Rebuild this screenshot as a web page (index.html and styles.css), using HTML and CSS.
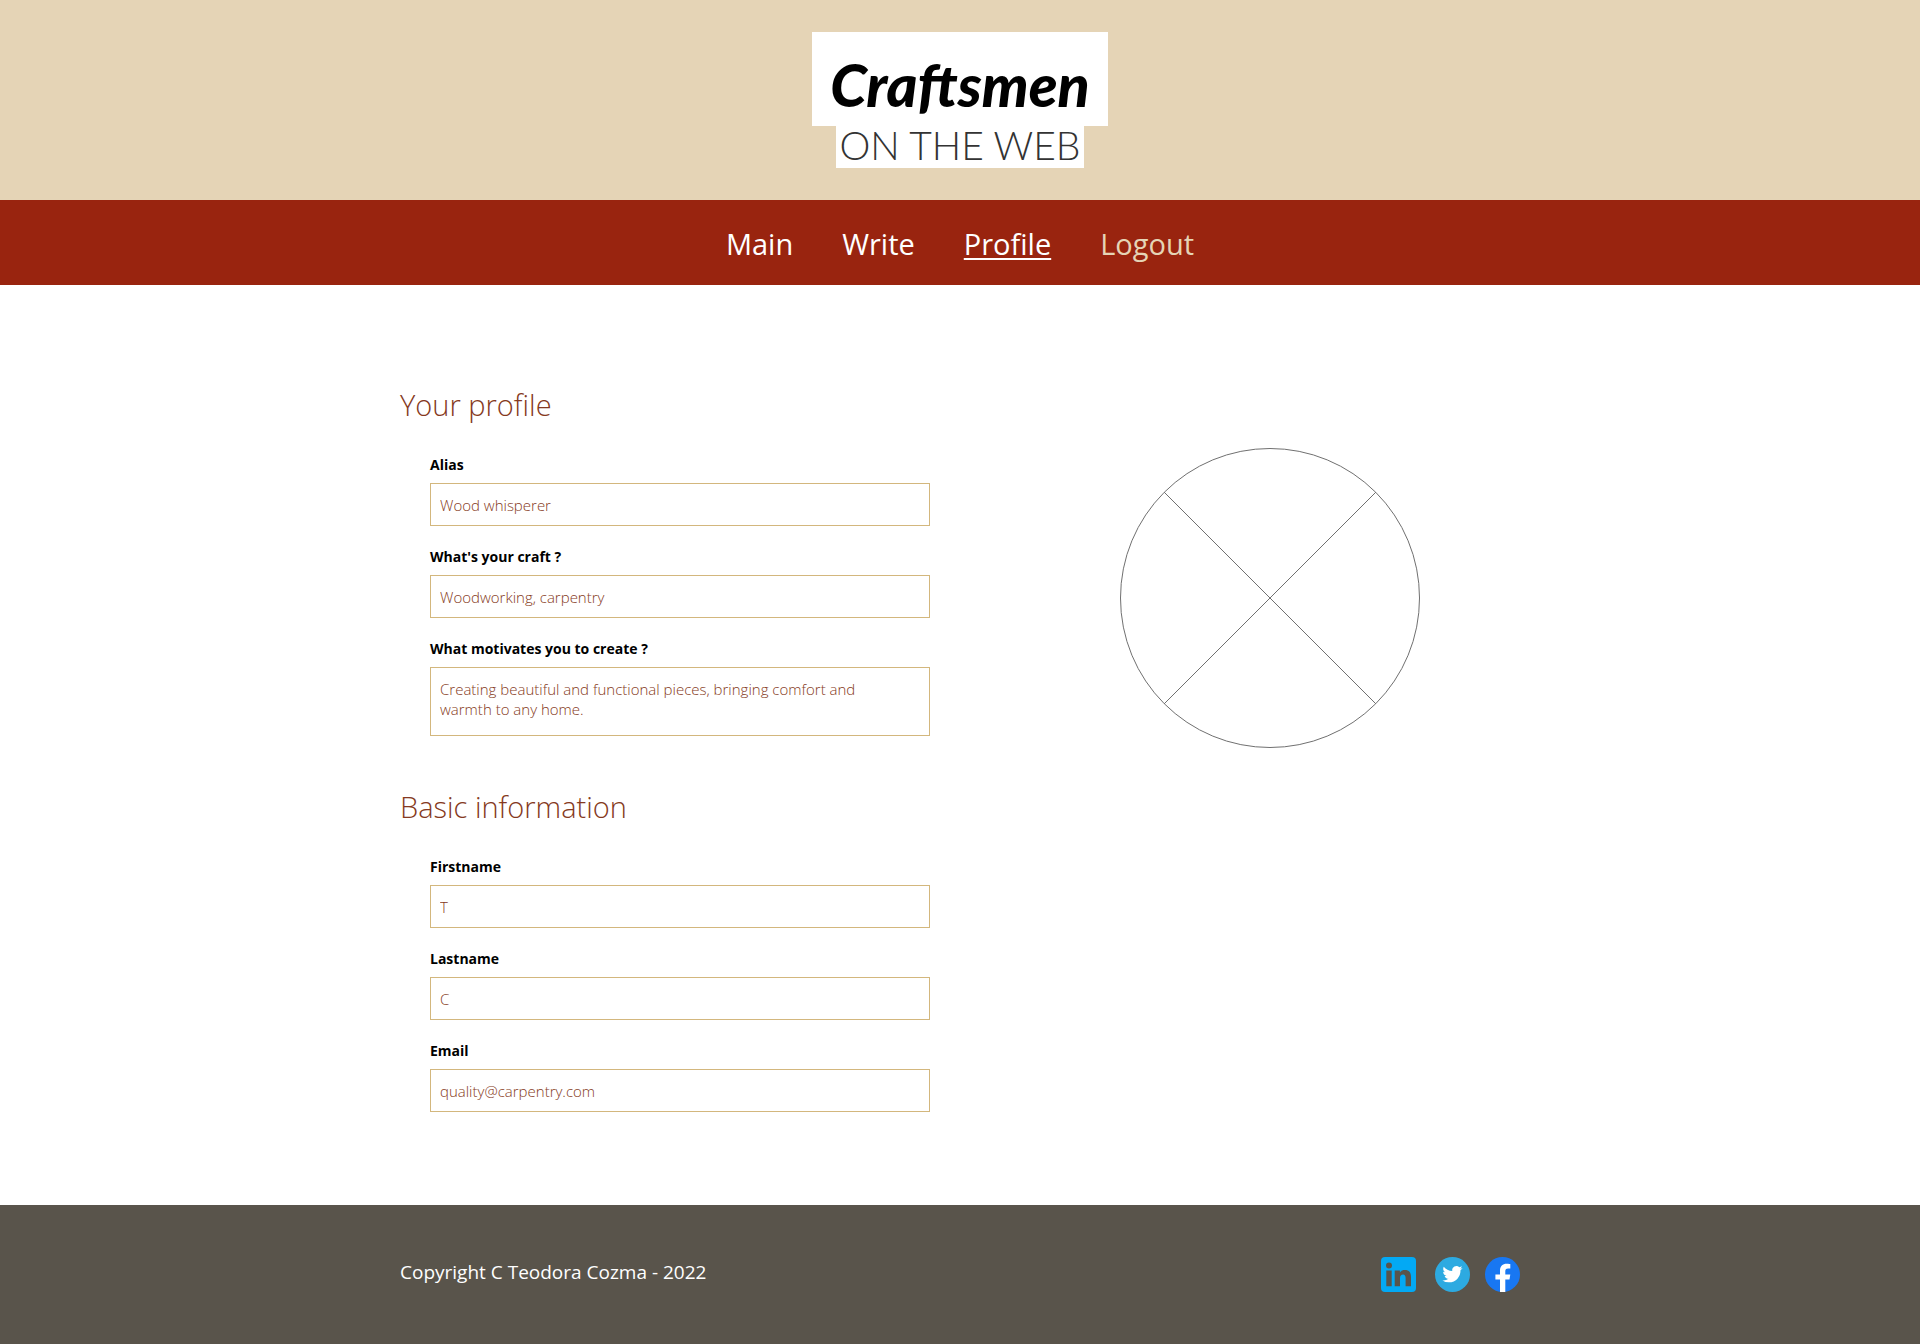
FILE: index.html
```html
<!DOCTYPE html>
<html lang="en">
<head>
<meta charset="utf-8">
<meta name="viewport" content="width=device-width, initial-scale=1">
<title>Craftsmen on the web - Profile</title>
<link rel="stylesheet" href="styles.css">
</head>
<body>
<header class="banner">
  <div class="logo">
    <span class="logo-name">Craftsmen</span>
    <span class="logo-tagline">ON THE WEB</span>
  </div>
</header>
<nav class="menu">
  <a class="menu-link" href="#main">Main</a>
  <a class="menu-link" href="#write">Write</a>
  <a class="menu-link menu-link-current" href="#profile">Profile</a>
  <a class="menu-link menu-link-logout" href="#logout">Logout</a>
</nav>
<main class="page">
  <form class="forms">
    <section class="group">
      <h2 class="group-title">Your profile</h2>
      <div class="fields">
        <div class="field">
          <label class="label" for="alias">Alias</label>
          <input class="control" id="alias" type="text" value="Wood whisperer">
        </div>
        <div class="field">
          <label class="label" for="craft">What's your craft ?</label>
          <input class="control" id="craft" type="text" value="Woodworking, carpentry">
        </div>
        <div class="field">
          <label class="label" for="motivation">What motivates you to create ?</label>
          <textarea class="control control-area" id="motivation" rows="2">Creating beautiful and functional pieces, bringing comfort and warmth to any home.</textarea>
        </div>
      </div>
    </section>
    <section class="group">
      <h2 class="group-title">Basic information</h2>
      <div class="fields">
        <div class="field">
          <label class="label" for="firstname">Firstname</label>
          <input class="control" id="firstname" type="text" value="T">
        </div>
        <div class="field">
          <label class="label" for="lastname">Lastname</label>
          <input class="control" id="lastname" type="text" value="C">
        </div>
        <div class="field">
          <label class="label" for="email">Email</label>
          <input class="control" id="email" type="email" value="quality@carpentry.com">
        </div>
      </div>
    </section>
  </form>
  <svg class="avatar" viewBox="0 0 300 300" role="img" aria-label="Profile picture">
    <circle cx="150" cy="150" r="149.5"/>
    <path d="M44 44 256 256M256 44 44 256"/>
  </svg>
</main>
<footer class="footer">
  <div class="footer-inner">
    <p class="copyright">Copyright C Teodora Cozma - 2022</p>
    <div class="social">
      <a class="social-link social-link-first" href="#linkedin" aria-label="LinkedIn">
        <svg class="social-icon" viewBox="0 0 35 35">
          <rect width="35" height="35" rx="4" fill="#03a9f4"/>
          <g fill="#59544b"><circle cx="8" cy="8.500" r="3"/><path d="M5.300 13.500h5.400v15.700H5.300zM13.700 13.500h5.200v2.100c.9-1.600 2.700-2.500 4.900-2.500 4.300 0 6.200 2.600 6.200 7v9.100h-5.400v-8.200c0-2.300-.8-3.500-2.600-3.500-2 0-3 1.400-3 3.600v8.100h-5.300z"/></g>
        </svg>
      </a>
      <a class="social-link" href="#twitter" aria-label="Twitter">
        <svg class="social-icon" viewBox="0 0 35 35">
          <circle cx="17.500" cy="17.500" r="17.500" fill="#2daae1"/>
          <path transform="translate(7.400 7.100) scale(.84)" fill="#fff" d="M23.953 4.570a10 10 0 0 1-2.825.775 4.958 4.958 0 0 0 2.163-2.723c-.951.555-2.005.959-3.127 1.184a4.920 4.920 0 0 0-8.384 4.482C7.690 8.095 4.067 6.130 1.640 3.162a4.822 4.822 0 0 0-.666 2.475c0 1.710.870 3.213 2.188 4.096a4.904 4.904 0 0 1-2.228-.616v.060a4.923 4.923 0 0 0 3.946 4.827 4.996 4.996 0 0 1-2.212.085 4.936 4.936 0 0 0 4.604 3.417 9.867 9.867 0 0 1-6.102 2.105c-.390 0-.779-.023-1.170-.067a13.995 13.995 0 0 0 7.557 2.209c9.053 0 13.998-7.496 13.998-13.985 0-.210 0-.420-.015-.630A9.935 9.935 0 0 0 24 4.590z"/>
        </svg>
      </a>
      <a class="social-link" href="#facebook" aria-label="Facebook">
        <svg class="social-icon" viewBox="0 0 35 35">
          <circle cx="17.500" cy="17.500" r="17.500" fill="#1877f2"/>
          <path fill="#fff" d="M15 35V22.600h-4.600v-5H15v-3.900C15 9.200 17.700 6.800 21.700 6.800c2 0 3.600.3 3.600.3v4.400h-2.200c-2.200 0-2.800 1.300-2.800 2.700v3.400h5l-.8 5h-4.200V35z"/>
        </svg>
      </a>
    </div>
  </div>
</footer>
</body>
</html>
```
FILE: styles.css
```css
* {
  box-sizing: border-box;
}

body {
  margin: 0;
  background: #fff;
  color: #000;
  font-family: "Open Sans", "Noto Sans", sans-serif;
}

.banner {
  display: flex;
  justify-content: center;
  padding: 32px 24px;
  background: #e5d4b6;
}

.logo {
  display: flex;
  flex-direction: column;
  align-items: center;
  color: #000;
  white-space: nowrap;
}

.logo-name {
  padding: 12px 18px 0;
  background: #fff;
  font-family: "Lato", sans-serif;
  font-size: 59px;
  font-style: italic;
  font-weight: 900;
  line-height: 82px;
}

.logo-tagline {
  padding: 0 3px 4px;
  background: #fff;
  color: #333;
  font-family: "Lato", sans-serif;
  font-size: 39px;
  font-weight: 300;
  line-height: 38px;
}

.menu {
  display: flex;
  flex-wrap: wrap;
  justify-content: center;
  gap: 0 49px;
  padding: 24px 24px 21px;
  background: #99240f;
}

.menu-link {
  color: #fff;
  font-size: 29px;
  line-height: 40px;
  text-decoration: none;
}

.menu-link-current {
  text-decoration: underline;
  text-decoration-thickness: 2px;
  text-underline-offset: 3px;
}

.menu-link-logout {
  color: #e5d4b6;
}

.page {
  display: flex;
  flex-wrap: wrap;
  align-items: flex-start;
  gap: 62px 190px;
  max-width: 1168px;
  margin: 0 auto;
  padding: 101px 24px 93px;
}

.forms {
  display: flex;
  flex-direction: column;
  flex: 0 1 530px;
  gap: 52px;
}

.group {
  display: flex;
  flex-direction: column;
  gap: 31px;
}

.group-title {
  margin: 0;
  color: #853921;
  font-size: 29px;
  font-weight: 300;
  line-height: 38px;
}

.fields {
  display: flex;
  flex-direction: column;
  gap: 21px;
  padding-left: 30px;
}

.field {
  display: flex;
  flex-direction: column;
  gap: 8px;
}

.label {
  font-size: 14px;
  font-weight: 700;
  line-height: 20px;
}

.control {
  display: block;
  width: 100%;
  margin: 0;
  padding: 11px 9px 10px;
  border: 1px solid #d3b77d;
  border-radius: 0;
  background: #fff;
  color: #853921;
  font-family: inherit;
  font-size: 15px;
  font-weight: 300;
  line-height: 20px;
}

.control-area {
  padding: 11px 60px 16px 9px;
  overflow: hidden;
  resize: none;
}

.avatar {
  flex: none;
  width: 300px;
  height: 300px;
  margin-top: 62px;
  fill: none;
  stroke: #707070;
  stroke-width: 1;
}

.footer {
  padding: 52px 24px;
  background: #59544b;
}

.footer-inner {
  display: flex;
  flex-wrap: wrap;
  align-items: flex-start;
  justify-content: space-between;
  gap: 16px;
  max-width: 1120px;
  margin: 0 auto;
}

.copyright {
  margin: 0;
  color: #fff;
  font-size: 19px;
  line-height: 30px;
}

.social {
  display: flex;
  gap: 15px;
}

.social-link-first {
  margin-right: 4px;
}

.social-icon {
  display: block;
  width: 35px;
  height: 35px;
}
```
